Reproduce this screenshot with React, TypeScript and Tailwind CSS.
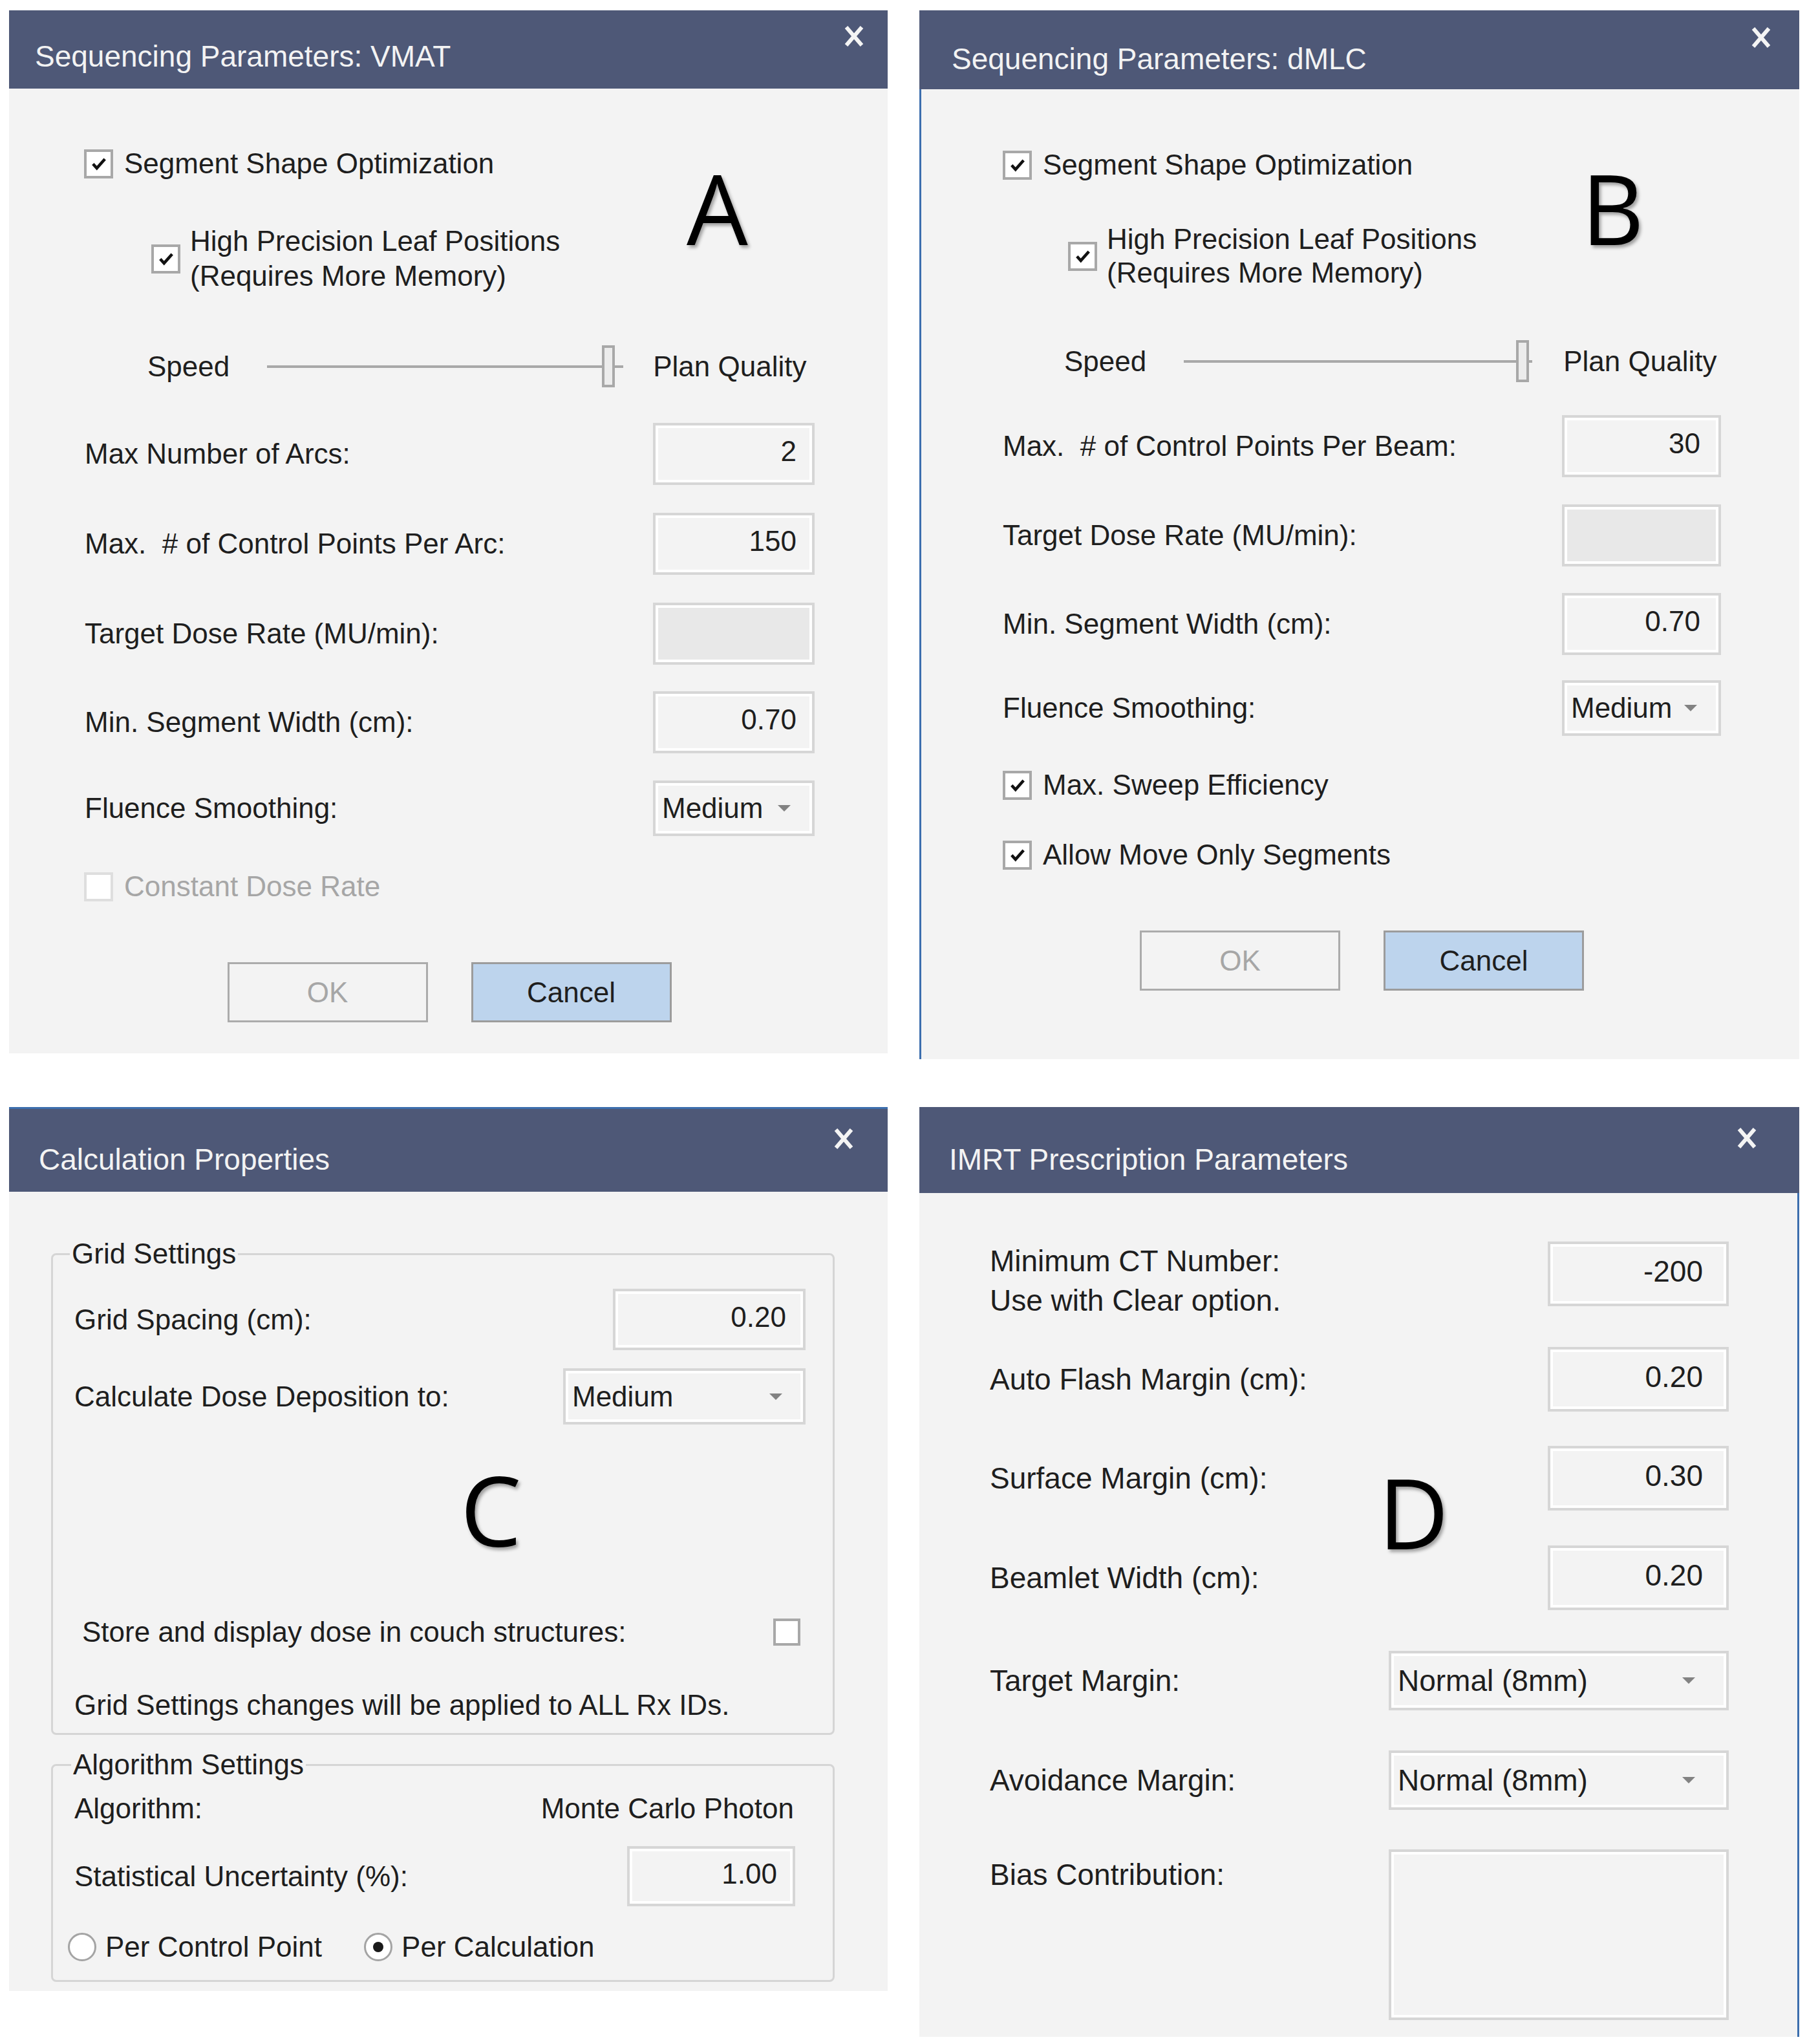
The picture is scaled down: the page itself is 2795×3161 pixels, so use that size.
import React from 'react';

const sans = "font-['Liberation_Sans',Arial,sans-serif]";

const CloseX = ({ className = '' }: { className?: string }) => (
  <svg viewBox="0 0 34 36" className={`h-[36px] w-[34px] shrink-0 ${className}`}>
    <path d="M5 4 L29 32 M29 4 L5 32" stroke="#f4f4f4" strokeWidth="6" fill="none" />
  </svg>
);

const CheckBox = ({ checked = false, disabled = false, className = 'h-[45px] w-[45px]' }: { checked?: boolean, disabled?: boolean, className?: string }) => (
  <span className={`flex shrink-0 items-center justify-center border-[4px] bg-white ${disabled ? 'border-[#dedede]' : 'border-[#a8a8a8]'} ${className}`}>
    {checked && (
      <svg viewBox="0 0 24 24" className="h-[26px] w-[26px]">
        <path d="M3.5 12.5 L9 18.5 L20.5 5.5" stroke="#111" strokeWidth="4.2" fill="none" />
      </svg>
    )}
  </span>
);

const Radio = ({ selected = false }: { selected?: boolean }) => (
  <span className="flex h-[44px] w-[44px] shrink-0 items-center justify-center rounded-full border-[3px] border-[#a4a4a4] bg-white">
    {selected && <span className="h-[16px] w-[16px] rounded-full bg-[#1a1a1a]" />}
  </span>
);

const Field = ({ value = '', className, disabled = false, pad = 'pr-[24px]' }: { value?: string, className: string, disabled?: boolean, pad?: string }) => (
  <div className={`flex shrink-0 items-center justify-end border-[4px] border-[#d6d6d6] shadow-[inset_0_0_0_4px_#ffffff] ${disabled ? 'bg-[#e8e8e8]' : 'bg-[#f3f3f3]'} ${className}`}>
    <span className={`pb-[8px] leading-[54px] ${pad}`}>{value}</span>
  </div>
);

const Arrow = () => (
  <svg viewBox="0 0 20 10" className="h-[10px] w-[20px] shrink-0">
    <polygon points="0,0 20,0 10,10" fill="#828282" />
  </svg>
);

const Dropdown = ({ value, className, pad = 'pr-[33px]' }: { value: string, className: string, pad?: string }) => (
  <div className={`flex shrink-0 items-center justify-between border-[4px] border-[#d6d6d6] bg-[#f3f3f3] pl-[10px] shadow-[inset_0_0_0_4px_#ffffff] ${pad} ${className}`}>
    <span className="leading-[54px]">{value}</span>
    <Arrow />
  </div>
);

const Row = ({ label, className = '', children }: { label: string, className?: string, children: React.ReactNode }) => (
  <div className={`flex items-center justify-between ${className}`}>
    <span className="whitespace-pre leading-[54px]">{label}</span>
    {children}
  </div>
);

const CheckRow = ({ label, className = '', checked = true, disabled = false }: { label: string, className?: string, checked?: boolean, disabled?: boolean }) => (
  <div className={`flex items-center gap-[17px] ${className}`}>
    <CheckBox checked={checked} disabled={disabled} />
    <span className={`whitespace-nowrap leading-[54px] ${disabled ? 'text-[#a6a6a6]' : ''}`}>{label}</span>
  </div>
);

const Buttons = ({ className = '' }: { className?: string }) => (
  <div className={`flex justify-center gap-[67px] ${className}`}>
    <div className="flex h-[93px] w-[310px] items-center justify-center border-[3px] border-[#ababab] bg-[#f3f3f3] text-[#a6a6a6]">OK</div>
    <div className="flex h-[93px] w-[310px] items-center justify-center border-[3px] border-[#9c9c9c] bg-[#bdd4ed]">Cancel</div>
  </div>
);

const BigLetter = ({ children, className }: { children: string, className: string }) => (
  <span className={`absolute font-['Open_Sans',sans-serif] text-[150px] leading-[150px] text-black [text-shadow:3px_4px_5px_rgba(0,0,0,0.35)] ${className}`}>{children}</span>
);

const TitleBar = ({ title, className, textClass, closeClass }: { title: string, className: string, textClass: string, closeClass: string }) => (
  <div className={`flex shrink-0 items-start justify-between bg-[#4e5877] text-[46px] text-[#f3f3f3] ${className}`}>
    <span className={`whitespace-nowrap leading-[54px] ${textClass}`}>{title}</span>
    <CloseX className={closeClass} />
  </div>
);

const PanelA = () => (
  <div className="relative flex h-[1613px] w-[1359px] flex-col">
    <TitleBar title="Sequencing Parameters: VMAT" className="h-[121px] pl-[40px]" textClass="mt-[44px]" closeClass="mt-[22px] mr-[35px]" />
    <div className="flex flex-1 flex-col bg-[#f3f3f3] pl-[116px] pr-[113px]">
      <CheckRow label="Segment Shape Optimization" className="mt-[89px]" />
      <div className="ml-[104px] mt-[66px] flex items-center gap-[15px]">
        <CheckBox checked />
        <span className="whitespace-nowrap leading-[54px]">High Precision Leaf Positions<br />(Requires More Memory)</span>
      </div>
      <div className="ml-[98px] mt-[80px] flex h-[65px] items-center">
        <span className="leading-[54px]">Speed</span>
        <div className="relative ml-[58px] flex h-[65px] w-[551px] items-center">
          <div className="h-[4px] w-full bg-[#a8a8a8]" />
          <div className="absolute left-[518px] top-0 h-[65px] w-[20px] border-[4px] border-[#a8a8a8] bg-[#ececec]" />
        </div>
        <span className="ml-[46px] whitespace-nowrap leading-[54px]">Plan Quality</span>
      </div>
      <Row label="Max Number of Arcs:" className="ml-[1px] mt-[55px]"><Field value="2" className="h-[96px] w-[250px]" /></Row>
      <Row label={'Max.\u00a0 # of Control Points Per Arc:'} className="ml-[1px] mt-[43px]"><Field value="150" className="h-[96px] w-[250px]" /></Row>
      <Row label="Target Dose Rate (MU/min):" className="ml-[1px] mt-[43px]"><Field disabled className="h-[96px] w-[250px]" /></Row>
      <Row label="Min. Segment Width (cm):" className="ml-[1px] mt-[41px]"><Field value="0.70" className="h-[96px] w-[250px]" /></Row>
      <Row label="Fluence Smoothing:" className="ml-[1px] mt-[42px]"><Dropdown value="Medium" className="h-[86px] w-[250px]" /></Row>
      <CheckRow label="Constant Dose Rate" checked={false} disabled className="mt-[51px]" />
      <Buttons className="mt-[90px]" />
    </div>
    <BigLetter className="left-[1048px] top-[230px]">A</BigLetter>
  </div>
);

const PanelB = () => (
  <div className="relative flex h-[1622px] w-[1361px] flex-col">
    <TitleBar title="Sequencing Parameters: dMLC" className="h-[122px] pl-[50px]" textClass="mt-[48px]" closeClass="mt-[24px] mr-[42px]" />
    <div className="flex flex-1 flex-col border-l-[3px] border-[#3d6fae] bg-[#f3f3f3] pl-[126px] pr-[121px]">
      <CheckRow label="Segment Shape Optimization" className="mt-[90px]" />
      <div className="ml-[101px] mt-[62px] flex items-center gap-[15px]">
        <CheckBox checked />
        <span className="whitespace-nowrap leading-[52px]">High Precision Leaf Positions<br />(Requires More Memory)</span>
      </div>
      <div className="ml-[95px] mt-[78px] flex h-[65px] items-center">
        <span className="leading-[54px]">Speed</span>
        <div className="relative ml-[58px] flex h-[65px] w-[539px] items-center">
          <div className="h-[4px] w-full bg-[#a8a8a8]" />
          <div className="absolute left-[514px] top-0 h-[65px] w-[20px] border-[4px] border-[#a8a8a8] bg-[#ececec]" />
        </div>
        <span className="ml-[48px] whitespace-nowrap leading-[54px]">Plan Quality</span>
      </div>
      <Row label={'Max.\u00a0 # of Control Points Per Beam:'} className="mt-[51px]"><Field value="30" pad="pr-[28px]" className="h-[96px] w-[246px]" /></Row>
      <Row label="Target Dose Rate (MU/min):" className="mt-[42px]"><Field disabled className="h-[96px] w-[246px]" /></Row>
      <Row label="Min. Segment Width (cm):" className="mt-[41px]"><Field value="0.70" pad="pr-[28px]" className="h-[96px] w-[246px]" /></Row>
      <Row label="Fluence Smoothing:" className="mt-[39px]"><Dropdown value="Medium" className="h-[86px] w-[246px]" /></Row>
      <CheckRow label="Max. Sweep Efficiency" className="mt-[49px]" />
      <CheckRow label="Allow Move Only Segments" className="mt-[54px]" />
      <Buttons className="mt-[90px]" />
    </div>
    <BigLetter className="left-[1024px] top-[230px]">B</BigLetter>
  </div>
);

const PanelC = () => (
  <div className="relative flex h-[1367px] w-[1359px] flex-col">
    <TitleBar title="Calculation Properties" className="h-[131px] border-t-[3px] border-[#3d6fae] pl-[46px]" textClass="mt-[51px]" closeClass="mt-[28px] mr-[51px]" />
    <div className="flex flex-1 flex-col bg-[#f3f3f3] pl-[65px] pr-[82px] pt-[69px]">
      <fieldset className="flex flex-col rounded-[8px] border-[3px] border-[#d5d5d5] pb-[16px]">
        <legend className="ml-[26px] px-[3px] leading-[54px]">Grid Settings</legend>
        <Row label="Grid Spacing (cm):" className="mt-[27px] pl-[33px] pr-[42px]"><Field value="0.20" pad="pr-[26px]" className="h-[95px] w-[298px]" /></Row>
        <Row label="Calculate Dose Deposition to:" className="mt-[28px] pl-[33px] pr-[42px]"><Dropdown value="Medium" pad="pr-[32px]" className="h-[87px] w-[375px]" /></Row>
        <div className="mt-[294px] flex items-center justify-between pl-[45px] pr-[50px]">
          <span className="leading-[54px]">Store and display dose in couch structures:</span>
          <CheckBox className="h-[42px] w-[42px]" />
        </div>
        <span className="mt-[59px] pl-[33px] leading-[54px]">Grid Settings changes will be applied to ALL Rx IDs.</span>
      </fieldset>
      <fieldset className="mt-[19px] flex flex-col rounded-[8px] border-[3px] border-[#d5d5d5] pb-[24px]">
        <legend className="ml-[28px] px-[3px] leading-[54px]">Algorithm Settings</legend>
        <div className="mt-[14px] flex items-center justify-between pl-[33px] pr-[60px]">
          <span className="leading-[54px]">Algorithm:</span>
          <span className="leading-[54px]">Monte Carlo Photon</span>
        </div>
        <Row label="Statistical Uncertainty (%):" className="mt-[31px] pl-[33px] pr-[58px]"><Field value="1.00" pad="pr-[24px]" className="h-[93px] w-[260px]" /></Row>
        <div className="mt-[36px] flex items-center pl-[23px]">
          <Radio />
          <span className="ml-[14px] leading-[54px]">Per Control Point</span>
          <span className="ml-[65px]"><Radio selected /></span>
          <span className="ml-[14px] leading-[54px]">Per Calculation</span>
        </div>
      </fieldset>
    </div>
    <BigLetter className="left-[698px] top-[547px]">C</BigLetter>
  </div>
);

const PanelD = () => (
  <div className="relative flex h-[1438px] w-[1361px] flex-col text-[46px]">
    <TitleBar title="IMRT Prescription Parameters" className="h-[133px] pl-[46px]" textClass="mt-[54px]" closeClass="mt-[30px] mr-[64px]" />
    <div className="flex flex-1 flex-col border-r-[3px] border-[#3d6fae] bg-[#f3f3f3] pl-[109px] pr-[106px]">
      <div className="mt-[75px] flex items-start justify-between">
        <span className="whitespace-nowrap leading-[61px]">Minimum CT Number:<br />Use with Clear option.</span>
        <Field value="-200" pad="pr-[36px]" className="h-[100px] w-[280px]" />
      </div>
      <Row label="Auto Flash Margin (cm):" className="mt-[41px]"><Field value="0.20" pad="pr-[36px]" className="h-[100px] w-[280px]" /></Row>
      <Row label="Surface Margin (cm):" className="mt-[53px]"><Field value="0.30" pad="pr-[36px]" className="h-[100px] w-[280px]" /></Row>
      <Row label="Beamlet Width (cm):" className="mt-[54px]"><Field value="0.20" pad="pr-[36px]" className="h-[100px] w-[280px]" /></Row>
      <Row label="Target Margin:" className="mt-[63px]"><Dropdown value="Normal (8mm)" pad="pr-[48px]" className="h-[92px] w-[526px]" /></Row>
      <Row label="Avoidance Margin:" className="mt-[62px]"><Dropdown value="Normal (8mm)" pad="pr-[48px]" className="h-[92px] w-[526px]" /></Row>
      <div className="mt-[61px] flex items-start justify-between">
        <span className="mt-[12px] leading-[54px]">Bias Contribution:</span>
        <div className="h-[264px] w-[526px] border-[4px] border-[#d6d6d6] bg-[#f3f3f3] shadow-[inset_0_0_0_4px_#ffffff]" />
      </div>
    </div>
    <BigLetter className="left-[710px] top-[551px]">D</BigLetter>
  </div>
);

export default function App() {
  return (
    <div className={`h-[3161px] w-[2795px] bg-white pl-[14px] pt-[16px] text-[44px] text-[#1e1e1e] ${sans}`}>
      <div className="flex items-start gap-[49px]">
        <PanelA />
        <PanelB />
      </div>
      <div className="mt-[74px] flex items-start gap-[49px]">
        <PanelC />
        <PanelD />
      </div>
    </div>
  );
}
